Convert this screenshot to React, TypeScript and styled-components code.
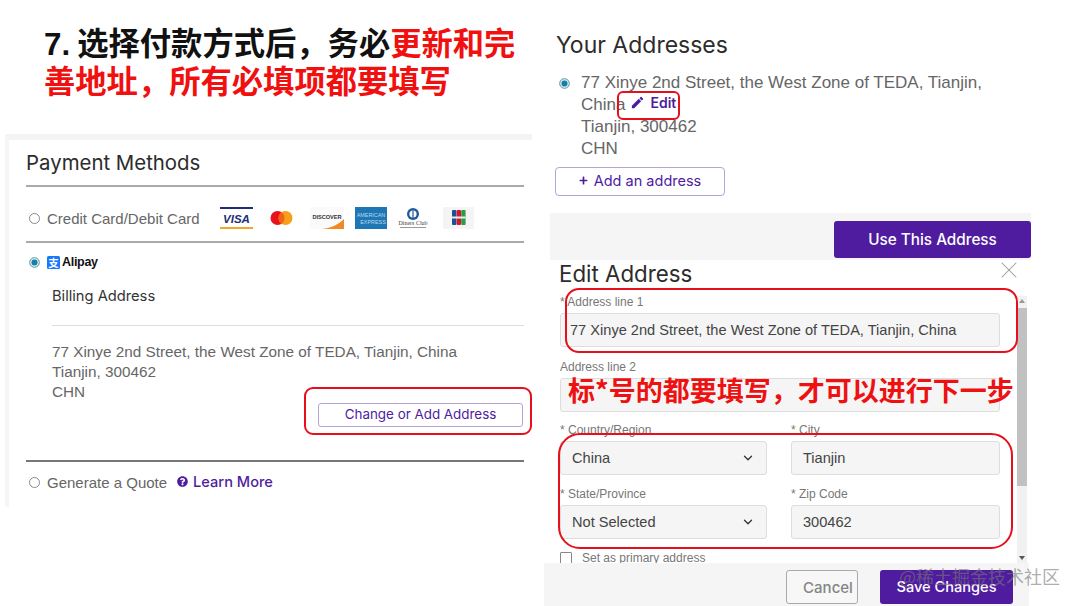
import React from "react";
import styled, { createGlobalStyle } from "styled-components";
import { MdEdit } from "react-icons/md";
import { FaPlus, FaQuestionCircle } from "react-icons/fa";
import { ChevronDown, X } from "lucide-react";

const sans = `"Liberation Sans", Arial, sans-serif`;
const ui = `Inter, "Noto Sans", sans-serif`;
const cjk = `"Noto Sans CJK SC", "Noto Sans", sans-serif`;
const purple = "#4f1ca0";
const red = "#e5101c";

const GlobalStyle = createGlobalStyle`
    html, body {
        margin: 0;
        background: #fff;
        overflow: hidden;
    }
    * {
        box-sizing: border-box;
    }
`;

const Page = styled.div`
    position: relative;
    display: flex;
    width: 1080px;
    height: 606px;
    overflow: hidden;
`;

const LeftColumn = styled.div`
    width: 544px;
    flex: none;
    padding-top: 23px;
`;

const Headline = styled.h1`
    margin: 0 0 35px 44px;
    width: 480px;
    font-family: ${cjk};
    font-size: 31.3px;
    line-height: 38px;
    font-weight: 700;
    color: #111;
`;

const Step = styled.span`
    font-family: ${sans};
    line-height: 0;
`;

const Hot = styled.span`
    color: #f01010;
`;

const PaymentPanel = styled.section`
    position: relative;
    margin-left: 5px;
    width: 527px;
    height: 373px;
    border-top: 6px solid #f4f4f4;
    border-left: 4px solid #f6f6f6;
    padding: 0 8px 0 17px;
`;

const PanelTitle = styled.h2`
    margin: 0;
    height: 47px;
    padding-top: 10px;
    border-bottom: 2px solid #aaa;
    font-family: ${ui};
    font-size: 20.4px;
    line-height: 26px;
    font-weight: 400;
    color: #2c2c2c;
`;

const MethodRow = styled.div`
    display: flex;
    align-items: center;
    height: 56px;
    padding: 8px 0 0 3px;
    border-bottom: 2px solid #aaa;
`;

const Radio = styled.span<{ $checked?: boolean }>`
    flex: none;
    display: block;
    width: 11px;
    height: 11px;
    border-radius: 50%;
    border: 1px solid ${p => (p.$checked ? "#9db4bd" : "#8a8a8a")};
    background: ${p => (p.$checked ? "#0f83a5" : "#fff")};
    box-shadow: ${p => (p.$checked ? "inset 0 0 0 1.5px #d6e6ec" : "none")};
`;

const MethodLabel = styled.span`
    margin-left: 7px;
    font-family: ${sans};
    font-size: 15px;
    color: #666;
    white-space: nowrap;
`;

const CardLogos = styled.div`
    display: flex;
    align-items: center;
    margin-left: 20px;
`;

const CardSlot = styled.span<{ $gap: number }>`
    display: block;
    height: 22px;
    margin-right: ${p => p.$gap}px;
`;

const AlipayRow = styled.div`
    display: flex;
    align-items: center;
    height: 38px;
    padding-left: 3px;
`;

const AlipayMark = styled.span`
    display: flex;
    margin-left: 7px;
`;

const AlipayName = styled.span`
    margin-left: 2px;
    font-family: ${sans};
    font-size: 12.5px;
    font-weight: 700;
    letter-spacing: -0.3px;
    color: #111;
`;

const BillingBlock = styled.div`
    padding-left: 26px;
`;

const BillingTitle = styled.h3`
    margin: 0;
    padding: 6px 0 20px;
    border-bottom: 1px solid #ddd;
    font-family: ${ui};
    font-size: 14.7px;
    line-height: 18px;
    font-weight: 400;
    color: #333;
`;

const BillingText = styled.div`
    margin-top: 16px;
    font-family: ${sans};
    font-size: 15.3px;
    line-height: 20px;
    color: #666;
`;

const OutlineButton = styled.div`
    display: flex;
    align-items: center;
    justify-content: center;
    padding-bottom: 2px;
    border: 1px solid #b5a3d6;
    border-radius: 3px;
    background: #fff;
    font-family: ${ui};
    font-size: 13.4px;
    color: ${purple};
`;

const ChangeAddress = styled(OutlineButton)`
    width: 205px;
    height: 24px;
    margin: 1px 1px 0 auto;
`;

const QuoteRow = styled.div`
    display: flex;
    align-items: center;
    height: 42px;
    margin-top: 33px;
    padding-left: 3px;
    border-top: 2px solid #777;
`;

const LearnMore = styled.span`
    display: inline-flex;
    align-items: center;
    gap: 5px;
    margin-left: 10px;
    margin-top: -1px;
    font-family: ${ui};
    font-size: 14.6px;
    font-weight: 500;
    color: ${purple};
`;

const Callout = styled.div`
    position: absolute;
    border: 2px solid ${red};
    pointer-events: none;
`;

const ChangeCallout = styled(Callout)`
    left: 295px;
    top: 247px;
    width: 228px;
    height: 48px;
    border-radius: 9px;
`;

const RightColumn = styled.div`
    width: 487px;
    flex: none;
    padding-top: 30px;
`;

const AddressesTitle = styled.h2`
    margin: 0 0 12px 12px;
    font-family: ${ui};
    font-size: 23px;
    line-height: 30px;
    font-weight: 400;
    color: #2c2c2c;
`;

const AddressRow = styled.div`
    position: relative;
    display: flex;
    padding-left: 15px;
    font-family: ${sans};
    font-size: 17px;
    line-height: 22px;
    color: #666;
`;

const AddressRadio = styled(Radio)`
    margin-top: 6px;
    margin-right: 11px;
`;

const AddressLines = styled.div`
    width: 420px;
`;

const EditLink = styled.span`
    display: inline-flex;
    align-items: center;
    gap: 5px;
    height: 14px;
    margin-left: 5px;
    font-family: ${ui};
    font-size: 14px;
    font-weight: 600;
    color: ${purple};
`;

const EditCallout = styled(Callout)`
    left: 73px;
    top: 19px;
    width: 63px;
    height: 29px;
    border-radius: 6px;
`;

const AddAddress = styled(OutlineButton)`
    gap: 6px;
    width: 170px;
    height: 29px;
    margin: 7px 0 17px 11px;
    font-size: 14.5px;
    border-radius: 4px;
`;

const ConfirmBand = styled.div`
    display: flex;
    justify-content: flex-end;
    height: 47px;
    margin-left: 6px;
    padding-top: 8px;
    background: #f5f5f5;
`;

const PrimaryButton = styled.div`
    display: flex;
    align-items: center;
    justify-content: center;
    border-radius: 3px;
    background: ${purple};
    font-family: ${ui};
    font-weight: 500;
    color: #fff;
`;

const UseAddress = styled(PrimaryButton)`
    width: 197px;
    height: 37px;
    font-size: 15.3px;
`;

const Modal = styled.section`
    position: relative;
    width: 485px;
    background: #fff;
`;

const ModalHeader = styled.div`
    display: flex;
    justify-content: space-between;
    height: 36px;
    padding: 0 6px 0 15px;
`;

const ModalTitle = styled.h2`
    margin: 0;
    font-family: ${ui};
    font-size: 22.3px;
    line-height: 28px;
    font-weight: 400;
    color: #2c2c2c;
`;

const CloseIcon = styled(X)`
    margin-top: -4px;
`;

const ScrollArea = styled.div`
    display: flex;
    height: 267px;
    overflow: hidden;
    padding-right: 2px;
`;

const Form = styled.div`
    flex: 1;
    padding-left: 16px;
`;

const Label = styled.div`
    height: 13px;
    margin-bottom: 4px;
    font-family: ${sans};
    font-size: 12px;
    line-height: 13px;
    color: #777;
`;

const Control = styled.div<{ $inset: number }>`
    display: flex;
    align-items: center;
    justify-content: space-between;
    height: 34px;
    padding: 0 11px 0 ${p => p.$inset}px;
    border: 1px solid #ddd;
    border-radius: 3px;
    background: #f5f5f5;
    font-family: ${sans};
    font-size: 14.6px;
    color: #444;
`;

const WideField = styled.div<{ $bottom: number }>`
    width: 440px;
    margin-bottom: ${p => p.$bottom}px;
`;

const TwoColumns = styled.div`
    display: grid;
    grid-template-columns: 207px 209px;
    column-gap: 24px;
    row-gap: 13px;
    width: 440px;
    margin-bottom: 13px;
`;

const CheckRow = styled.div`
    display: flex;
    align-items: center;
    height: 12px;
    font-family: ${sans};
    font-size: 12px;
    color: #777;
`;

const CheckBox = styled.span`
    width: 12px;
    height: 12px;
    margin-right: 10px;
    border: 1px solid #888;
    border-radius: 1px;
    background: #fff;
`;

const ScrollRail = styled.div`
    position: relative;
    width: 10px;
    flex: none;
    background: #f1f1f1;
`;

const ScrollThumb = styled.div`
    width: 100%;
    height: 178px;
    margin-top: 12px;
    background: #c1c1c1;
`;

const ScrollArrow = styled.span<{ $down?: boolean }>`
    position: absolute;
    left: 2px;
    ${p => (p.$down ? "bottom: 3px;" : "top: 3px;")}
    width: 0;
    height: 0;
    border-left: 3px solid transparent;
    border-right: 3px solid transparent;
    ${p => (p.$down ? "border-top: 4px solid #555;" : "border-bottom: 4px solid #999;")}
`;

const ModalFooter = styled.div`
    display: flex;
    justify-content: flex-end;
    gap: 22px;
    height: 43px;
    padding: 7px 16px 0 0;
    background: #f5f5f5;
`;

const CancelButton = styled.div`
    display: flex;
    align-items: center;
    justify-content: center;
    width: 72px;
    height: 34px;
    padding-left: 12px;
    border: 1px solid #aaa;
    border-radius: 3px;
    background: #f7f7f7;
    font-family: ${ui};
    font-size: 15px;
    font-weight: 500;
    color: #858585;
`;

const SaveButton = styled(PrimaryButton)`
    width: 133px;
    height: 34px;
    font-size: 14.6px;
`;

const AddressCallout = styled(Callout)`
    left: 21px;
    top: 28px;
    width: 453px;
    height: 65px;
    border-radius: 14px;
`;

const RegionCallout = styled(Callout)`
    left: 14px;
    top: 173px;
    width: 455px;
    height: 116px;
    border-radius: 22px;
`;

const RequiredNote = styled.div`
    position: absolute;
    left: 24px;
    top: 111px;
    font-family: ${cjk};
    font-size: 27px;
    line-height: 38px;
    font-weight: 700;
    color: #ee1111;
    white-space: nowrap;
`;

const Watermark = styled.div`
    position: absolute;
    left: 899px;
    top: 565px;
    font-family: ${cjk};
    font-size: 18px;
    line-height: 22px;
    color: rgba(120, 120, 120, 0.62);
    white-space: nowrap;
`;

const VisaLogo = () => (
    <svg width="33" height="22" viewBox="0 0 33 22">
        <rect width="33" height="2" fill="#1a2f77" />
        <rect y="20" width="33" height="2" fill="#f0a72c" />
        <text x="16.5" y="15.5" textAnchor="middle" fontFamily="Liberation Sans" fontSize="11.5" fontWeight="700" fontStyle="italic" fill="#1a2f77">VISA</text>
    </svg>
);

const MastercardLogo = () => (
    <svg width="23" height="22" viewBox="0 0 23 22">
        <circle cx="7.5" cy="11" r="7" fill="#e8121c" />
        <circle cx="15.5" cy="11" r="7" fill="#f79e1b" />
        <path d="M11.5 5.3a7 7 0 0 1 0 11.4a7 7 0 0 1 0-11.4z" fill="#f2601a" />
    </svg>
);

const DiscoverLogo = () => (
    <svg width="34" height="22" viewBox="0 0 34 22">
        <rect width="34" height="22" fill="#fafafa" />
        <path d="M34 12v10H12c10-1 17-5 22-10z" fill="#f08a25" />
        <text x="17" y="11.5" textAnchor="middle" fontFamily="Liberation Sans" fontSize="5.6" fontWeight="700" fill="#333">DISCOVER</text>
    </svg>
);

const AmexLogo = () => (
    <svg width="32" height="22" viewBox="0 0 32 22">
        <rect width="32" height="22" fill="#1f76b4" />
        <text x="16" y="9.5" textAnchor="middle" fontFamily="Liberation Sans" fontSize="5.4" fill="#b9d9ee">AMERICAN</text>
        <text x="18" y="17" textAnchor="middle" fontFamily="Liberation Sans" fontSize="5.4" fill="#b9d9ee">EXPRESS</text>
    </svg>
);

const DinersLogo = () => (
    <svg width="30" height="22" viewBox="0 0 30 22">
        <circle cx="15" cy="7" r="6" fill="#1d5a9c" />
        <circle cx="15" cy="7" r="3.6" fill="#fff" />
        <rect x="14.4" y="3.6" width="1.2" height="6.8" fill="#1d5a9c" />
        <text x="15" y="18" textAnchor="middle" fontFamily="Liberation Serif" fontSize="6" fill="#444">Diners Club</text>
        <rect x="2" y="20" width="26" height="1" fill="#999" />
    </svg>
);

const JcbLogo = () => (
    <svg width="31" height="22" viewBox="0 0 31 22">
        <rect width="31" height="22" rx="1" fill="#f4f4f4" />
        <rect x="9" y="3" width="4.4" height="15" rx="1" fill="#1b4f9c" />
        <rect x="13.6" y="3" width="4.4" height="15" rx="1" fill="#d3182e" />
        <rect x="18.2" y="3" width="4.4" height="15" rx="1" fill="#2c9a47" />
        <rect x="9" y="9.5" width="13.6" height="2" fill="#e9eef0" />
    </svg>
);

const AlipayLogo = () => (
    <svg width="13" height="13" viewBox="0 0 13 13">
        <rect width="13" height="13" rx="1.5" fill="#1677ff" />
        <text x="6.5" y="10.5" textAnchor="middle" fontFamily="Noto Sans CJK SC" fontSize="10.5" fontWeight="700" fill="#fff">支</text>
    </svg>
);

const cards = [
    { logo: <VisaLogo />, gap: 17 },
    { logo: <MastercardLogo />, gap: 17 },
    { logo: <DiscoverLogo />, gap: 11 },
    { logo: <AmexLogo />, gap: 11 },
    { logo: <DinersLogo />, gap: 15 },
    { logo: <JcbLogo />, gap: 0 },
];

const Field: React.FC<{ label: string; value: string; select?: boolean; inset?: number }> = ({ label, value, select, inset = 11 }) => (
    <div>
        <Label>{label}</Label>
        <Control $inset={inset}>
            {value}
            {select && <ChevronDown size={14} strokeWidth={2.2} color="#333" />}
        </Control>
    </div>
);

export default function App() {
    return (
        <Page>
            <GlobalStyle />
            <LeftColumn>
                <Headline>
                    <Step>7.</Step> 选择付款方式后，务必<Hot>更新和完善地址，所有必填项都要填写</Hot>
                </Headline>
                <PaymentPanel>
                    <PanelTitle>Payment Methods</PanelTitle>
                    <MethodRow>
                        <Radio />
                        <MethodLabel>Credit Card/Debit Card</MethodLabel>
                        <CardLogos>
                            {cards.map((card, i) => (
                                <CardSlot key={i} $gap={card.gap}>{card.logo}</CardSlot>
                            ))}
                        </CardLogos>
                    </MethodRow>
                    <AlipayRow>
                        <Radio $checked />
                        <AlipayMark>
                            <AlipayLogo />
                        </AlipayMark>
                        <AlipayName>Alipay</AlipayName>
                    </AlipayRow>
                    <BillingBlock>
                        <BillingTitle>Billing Address</BillingTitle>
                        <BillingText>
                            77 Xinye 2nd Street, the West Zone of TEDA, Tianjin, China
                            <br />
                            Tianjin, 300462
                            <br />
                            CHN
                        </BillingText>
                        <ChangeAddress>Change or Add Address</ChangeAddress>
                    </BillingBlock>
                    <QuoteRow>
                        <Radio />
                        <MethodLabel>Generate a Quote</MethodLabel>
                        <LearnMore>
                            <FaQuestionCircle size={11} />
                            Learn More
                        </LearnMore>
                    </QuoteRow>
                    <ChangeCallout />
                </PaymentPanel>
            </LeftColumn>
            <RightColumn>
                <AddressesTitle>Your Addresses</AddressesTitle>
                <AddressRow>
                    <AddressRadio $checked />
                    <AddressLines>
                        77 Xinye 2nd Street, the West Zone of TEDA, Tianjin, China
                        <EditLink>
                            <MdEdit size={15} />
                            Edit
                        </EditLink>
                        <br />
                        Tianjin, 300462
                        <br />
                        CHN
                    </AddressLines>
                    <EditCallout />
                </AddressRow>
                <AddAddress>
                    <FaPlus size={9} />
                    Add an address
                </AddAddress>
                <ConfirmBand>
                    <UseAddress>Use This Address</UseAddress>
                </ConfirmBand>
                <Modal>
                    <ModalHeader>
                        <ModalTitle>Edit Address</ModalTitle>
                        <CloseIcon size={28} strokeWidth={0.9} color="#999" />
                    </ModalHeader>
                    <ScrollArea>
                        <Form>
                            <WideField $bottom={14}>
                                <Field label="* Address line 1" value="77 Xinye 2nd Street, the West Zone of TEDA, Tianjin, China" inset={9} />
                            </WideField>
                            <WideField $bottom={12}>
                                <Field label="Address line 2" value="" />
                            </WideField>
                            <TwoColumns>
                                <Field label="* Country/Region" value="China" select />
                                <Field label="* City" value="Tianjin" />
                                <Field label="* State/Province" value="Not Selected" select />
                                <Field label="* Zip Code" value="300462" />
                            </TwoColumns>
                            <CheckRow>
                                <CheckBox />
                                Set as primary address
                            </CheckRow>
                        </Form>
                        <ScrollRail>
                            <ScrollArrow />
                            <ScrollThumb />
                            <ScrollArrow $down />
                        </ScrollRail>
                    </ScrollArea>
                    <ModalFooter>
                        <CancelButton>Cancel</CancelButton>
                        <SaveButton>Save Changes</SaveButton>
                    </ModalFooter>
                    <AddressCallout />
                    <RegionCallout />
                    <RequiredNote>标*号的都要填写，才可以进行下一步</RequiredNote>
                </Modal>
            </RightColumn>
            <Watermark>@稀土掘金技术社区</Watermark>
        </Page>
    );
}
